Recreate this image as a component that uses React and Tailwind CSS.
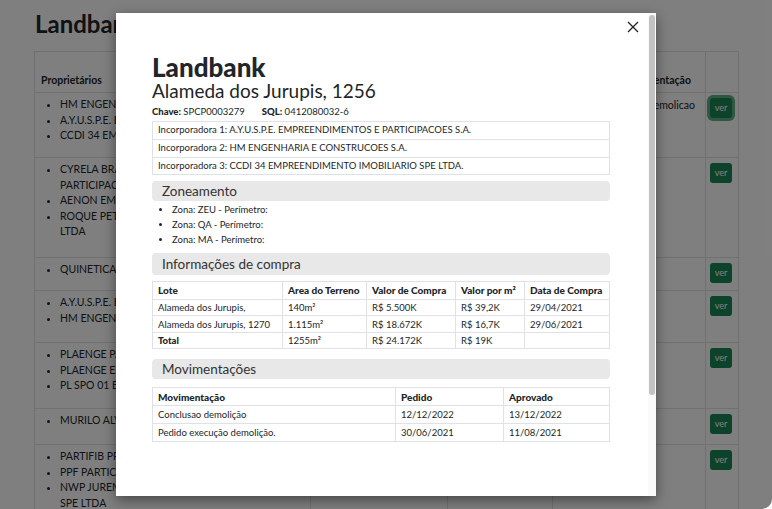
import React from "react";

const font = { fontFamily: "Lato, 'Noto Sans', sans-serif" };

const rows = [
  { items: ["HM ENGENHARIA E CONSTRUCOES S.A.", "A.Y.U.S.P.E. EMPREENDIMENTOS", "CCDI 34 EMPREENDIMENTO"], mov: "Conclusao demolicao", h: "h-[65px]", focus: true },
  { items: ["CYRELA BRAZIL REALTY S.A. EMPREEND. PARTICIPACOES", "AENON EMPREENDIMENTOS", "ROQUE PETRONI EMPREEND. IMOBIL. SPE LTDA"], mov: "", h: "h-[100px]" },
  { items: ["QUINETICA ADMINISTRACAO"], mov: "", h: "h-[33px]" },
  { items: ["A.Y.U.S.P.E. EMPREENDIMENTOS", "HM ENGENHARIA E CONSTRUCOES"], mov: "", h: "h-[52px]" },
  { items: ["PLAENGE PARTICIPACOES", "PLAENGE EMPREENDIMENTOS", "PL SPO 01 EMPREENDIMENTOS"], mov: "", h: "h-[66px]" },
  { items: ["MURILO ALVES"], mov: "", h: "h-[36px]" },
  { items: ["PARTIFIB PROJETOS", "PPF PARTICIPACOES", "NWP JUREMA EMPREENDIMENTOS IMOBIL. SPE LTDA"], mov: "", h: "h-[80px]" },
];

const compras = [
  ["Alameda dos Jurupis,", "140m²", "R$ 5.500K", "R$ 39,2K", "29/04/2021"],
  ["Alameda dos Jurupis, 1270", "1.115m²", "R$ 18.672K", "R$ 16,7K", "29/06/2021"],
];

const movs = [
  ["Conclusao demolição", "12/12/2022", "13/12/2022"],
  ["Pedido execução demolição.", "30/06/2021", "11/08/2021"],
];

function Background() {
  return (
    <div className="h-[509px] overflow-hidden bg-white rounded-br-[10px] text-[#212529]">
      <h1 className="pl-[35px] pt-[10px] text-[24px] font-bold leading-[28px]">Landbank</h1>
      <table className="ml-[34px] mt-[13px] w-[704px] border-collapse text-[10.5px] table-fixed">
        <colgroup>
          <col className="w-[276px]" />
          <col className="w-[137px]" />
          <col className="w-[105px]" />
          <col className="w-[153px]" />
          <col className="w-[33px]" />
        </colgroup>
        <thead>
          <tr className="h-[41px] border border-[#dee2e6]">
            <th className="text-left align-bottom pb-[3px] px-[6px] font-bold">Proprietários</th>
            <th className="text-left align-bottom pb-[3px] px-[6px] font-bold">Incorporadora</th>
            <th className="text-left align-bottom pb-[3px] px-[6px] font-bold">Zona</th>
            <th className="text-right align-bottom pb-[3px] pr-[14px] font-bold">Movimentação</th>
            <th className="border-l border-[#dee2e6]"></th>
          </tr>
        </thead>
        <tbody>
          {rows.map((r, i) => (
            <tr key={i} className={`${r.h} border border-[#dee2e6]`}>
              <td className="align-top pt-[4px] border-r border-[#dee2e6]">
                <ul className="list-disc pl-[25px] leading-[15.6px]">
                  {r.items.map((t) => (
                    <li key={t} className="pr-[20px]">{t}</li>
                  ))}
                </ul>
              </td>
              <td className="border-r border-[#dee2e6]"></td>
              <td className="border-r border-[#dee2e6]"></td>
              <td className="align-top pt-[5px] text-right pr-[10px] border-r border-[#dee2e6]">{r.mov}</td>
              <td className="align-top pt-[5px] pl-[4px]">
                <button className={`h-[20px] w-[22px] rounded-[3px] bg-[#198754] text-white text-[9px] ${r.focus ? "ring-[3px] ring-[#5fae84]" : ""}`}>ver</button>
              </td>
            </tr>
          ))}
        </tbody>
      </table>
    </div>
  );
}

function SectionBar({ children, h = "h-[21px] leading-[21px]" }) {
  return (
    <div className={`${h} rounded-[4px] bg-[#e8e8e8] pl-[10px] text-[13.5px] text-[#333]`}>{children}</div>
  );
}

const cell = "border border-[#dee2e6] px-[5px] h-[16.5px] leading-[15px] text-[9.5px]";
const head = "border border-[#dee2e6] px-[5px] h-[18px] leading-[16px] text-[10px] text-left font-black";

function Modal() {
  return (
    <div className="flex w-[540px] h-[483px] bg-white shadow-[0_4px_12px_rgba(0,0,0,0.45)]">
      <div className="flex-1 relative pl-[36px] pr-[38px] pt-[40px] text-[#212529]">
        <svg className="absolute right-[9px] top-[8px]" width="12" height="12" viewBox="0 0 12 12">
          <path d="M1 1 L11 11 M11 1 L1 11" stroke="#222" strokeWidth="1.3" fill="none" />
        </svg>
        <h2 className="text-[26px] font-black leading-[28px]">Landbank</h2>
        <div className="text-[19px] leading-[22px] -mt-[1px]">Alameda dos Jurupis, 1256</div>
        <div className="text-[9.5px] leading-[14px] mt-[3px]">
          <b className="font-black">Chave:</b> SPCP0003279
          <b className="font-black ml-[17px]">SQL:</b> 0412080032-6
        </div>
        <div className="mt-[2px] border border-[#dee2e6] text-[9.5px]">
          {["Incorporadora 1: A.Y.U.S.P.E. EMPREENDIMENTOS E PARTICIPACOES S.A.", "Incorporadora 2: HM ENGENHARIA E CONSTRUCOES S.A.", "Incorporadora 3: CCDI 34 EMPREENDIMENTO IMOBILIARIO SPE LTDA."].map((t, i) => (
            <div key={t} className={`h-[17.3px] leading-[16px] px-[5px] ${i > 0 ? "border-t border-[#dee2e6]" : ""}`}>{t}</div>
          ))}
        </div>
        <div className="mt-[6px]"><SectionBar h="h-[20px] leading-[20px]">Zoneamento</SectionBar></div>
        <ul className="list-disc pl-[20px] text-[9.5px] leading-[15px] mt-[1px]">
          <li>Zona: ZEU - Perímetro:</li>
          <li>Zona: QA - Perímetro:</li>
          <li>Zona: MA - Perímetro:</li>
        </ul>
        <div className="mt-[6px]"><SectionBar h="h-[22px] leading-[22px]">Informações de compra</SectionBar></div>
        <table className="mt-[6px] w-full border-collapse table-fixed">
          <colgroup>
            <col className="w-[130px]" />
            <col className="w-[84px]" />
            <col className="w-[89px]" />
            <col className="w-[69px]" />
            <col />
          </colgroup>
          <thead>
            <tr>
              {["Lote", "Area do Terreno", "Valor de Compra", "Valor por m²", "Data de Compra"].map((h) => (
                <th key={h} className={head}>{h}</th>
              ))}
            </tr>
          </thead>
          <tbody>
            {compras.map((r) => (
              <tr key={r[0]}>
                {r.map((c, j) => (
                  <td key={j} className={cell}>{c}</td>
                ))}
              </tr>
            ))}
            <tr>
              <td className={`${cell} font-black`}>Total</td>
              <td className={cell}>1255m²</td>
              <td className={cell}>R$ 24.172K</td>
              <td className={cell}>R$ 19K</td>
              <td className={cell}></td>
            </tr>
          </tbody>
        </table>
        <div className="mt-[10px]"><SectionBar h="h-[20px] leading-[20px]">Movimentações</SectionBar></div>
        <table className="mt-[8px] w-full border-collapse table-fixed">
          <colgroup>
            <col className="w-[243px]" />
            <col className="w-[108px]" />
            <col />
          </colgroup>
          <thead>
            <tr>
              {["Movimentação", "Pedido", "Aprovado"].map((h) => (
                <th key={h} className={head}>{h}</th>
              ))}
            </tr>
          </thead>
          <tbody>
            {movs.map((r) => (
              <tr key={r[0]}>
                {r.map((c, j) => (
                  <td key={j} className={`${cell} h-[18px]`}>{c}</td>
                ))}
              </tr>
            ))}
          </tbody>
        </table>
      </div>
      <div className="w-[8px] bg-[#fafafa] pt-[2px]">
        <div className="ml-[1px] w-[6px] h-[380px] rounded-full bg-[#c2c2c2]"></div>
      </div>
    </div>
  );
}

export default function App() {
  return (
    <div className="relative w-[772px] h-[509px] overflow-hidden" style={font}>
      <Background />
      <div className="absolute inset-0 bg-black/50 rounded-br-[10px] pl-[116px] pt-[13px]">
        <Modal />
      </div>
    </div>
  );
}
